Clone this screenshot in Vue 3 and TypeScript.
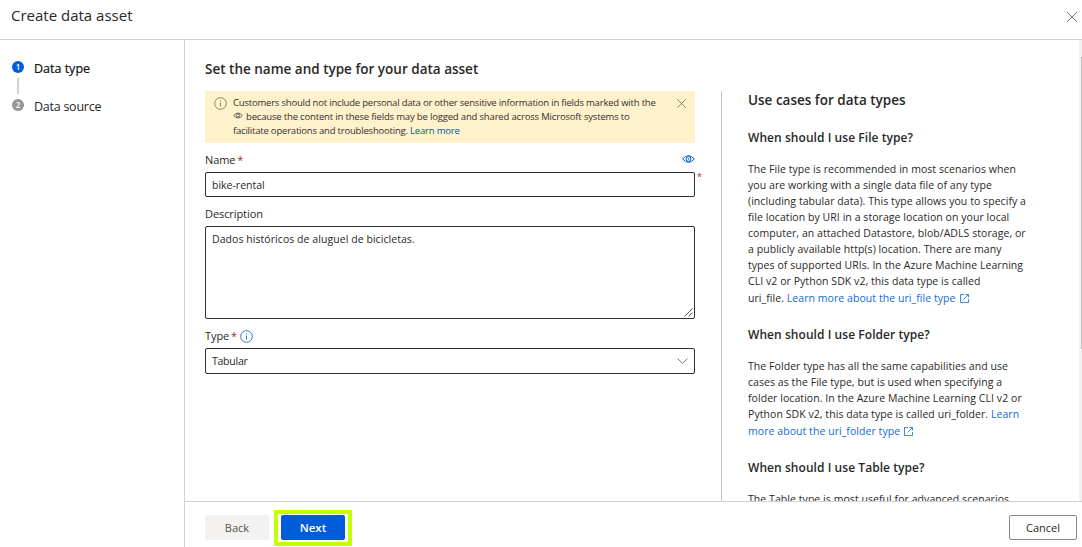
<script setup lang="ts">
interface Step {
  id: number
  label: string
  active: boolean
}
interface UseCase {
  title: string
  lines: string[]
  lead: string
  link: string
}

const steps: Step[] = [
  { id: 1, label: 'Data type', active: true },
  { id: 2, label: 'Data source', active: false },
]

const useCases: UseCase[] = [
  {
    title: 'When should I use File type?',
    lines: [
      'The File type is recommended in most scenarios when',
      'you are working with a single data file of any type',
      '(including tabular data). This type allows you to specify a',
      'file location by URI in a storage location on your local',
      'computer, an attached Datastore, blob/ADLS storage, or',
      'a publicly available http(s) location. There are many',
      'types of supported URIs. In the Azure Machine Learning',
      'CLI v2 or Python SDK v2, this data type is called',
    ],
    lead: 'uri_file.',
    link: 'Learn more about the uri_file type',
  },
  {
    title: 'When should I use Folder type?',
    lines: [
      'The Folder type has all the same capabilities and use',
      'cases as the File type, but is used when specifying a',
      'folder location. In the Azure Machine Learning CLI v2 or',
      'Python SDK v2, this data type is called uri_folder. |Learn',
    ],
    lead: '',
    link: 'more about the uri_folder type',
  },
  {
    title: 'When should I use Table type?',
    lines: ['The Table type is most useful for advanced scenarios'],
    lead: '',
    link: '',
  },
]
</script>

<template>
  <div class="panel">
    <header class="header">
      <h1>Create data asset</h1>
      <svg class="close" width="10" height="10" viewBox="0 0 10 10"><path d="M0 0L10 10M10 0L0 10" /></svg>
    </header>

    <div class="body">
      <nav class="steps">
        <div v-for="s in steps" :key="s.id" class="step" :class="{ active: s.active }">
          <span class="dot">{{ s.id }}</span>
          <span class="step-label">{{ s.label }}</span>
        </div>
      </nav>

      <div class="content">
        <main class="scroll">
          <section class="form">
            <h2>Set the name and type for your data asset</h2>

            <div class="notice">
              <svg class="notice-info" width="13" height="13" viewBox="0 0 13 13">
                <circle cx="6.5" cy="6.5" r="5.8" /><path d="M6.5 5.6V9.6M6.5 3.4V4.5" />
              </svg>
              <p>
                <span class="n1">Customers should not include personal data or other sensitive information in fields marked with the</span>
                <span class="n2"><svg class="mini-eye" width="10" height="7" viewBox="0 0 14 9"><path d="M1 4.5Q7-2.5 13 4.5Q7 11.5 1 4.5Z" /><circle cx="7" cy="4.5" r="2.2" /></svg>because the content in these fields may be logged and shared across Microsoft systems to</span>
                <span class="n3">facilitate operations and troubleshooting. <a>Learn more</a></span>
              </p>
              <svg class="notice-close" width="9" height="9" viewBox="0 0 9 9"><path d="M.3.3L8.7 8.7M8.7.3L.3 8.7" /></svg>
            </div>

            <div class="label-row name-row">
              <label>Name <i>*</i></label>
              <svg class="eye" width="13" height="8" viewBox="0 0 13 8">
                <path d="M.6 4Q6.5-2.6 12.4 4Q6.5 10.6.6 4Z" /><circle cx="6.5" cy="4" r="2.4" /><circle class="pupil" cx="6.5" cy="4" r=".8" />
              </svg>
            </div>
            <div class="box input"><span>bike-rental</span><i class="outer-star">*</i></div>

            <div class="label-row desc-row"><label>Description</label></div>
            <div class="box area">
              <span class="t-desc">Dados históricos de aluguel de bicicletas.</span>
              <svg class="grip" width="9" height="9" viewBox="0 0 9 9"><path d="M.5 8.5L8.5 .5M4.5 8.5L8.5 4.5" /></svg>
            </div>

            <div class="label-row type-row">
              <label>Type <i>*</i></label>
              <svg class="type-info" width="13" height="13" viewBox="0 0 13 13">
                <circle cx="6.5" cy="6.5" r="5.8" /><path d="M6.5 5.4V9.6M6.5 3.3V4.4" />
              </svg>
            </div>
            <div class="box select">
              <span class="t-tab">Tabular</span>
              <svg width="11" height="6" viewBox="0 0 11 6"><path d="M.5.5L5.5 5.3L10.5.5" /></svg>
            </div>
          </section>

          <aside class="help">
            <h3>Use cases for data types</h3>
            <article v-for="u in useCases" :key="u.title">
              <h4>{{ u.title }}</h4>
              <p>
                <span v-for="line in u.lines" :key="line" class="line">{{ line.split('|')[0] }}<a v-if="line.includes('|')">{{ line.split('|')[1] }}</a></span>
                <span v-if="u.link" class="line last">{{ u.lead ? u.lead + ' ' : '' }}<a>{{ u.link }}</a><svg class="ext" width="9" height="9" viewBox="0 0 9 9"><path d="M4 .5H.5V8.5H8.5V5M5.5.5H8.5V3.5M8.5.5L3.7 5.3" /></svg></span>
              </p>
            </article>
          </aside>
          <div class="track"><div class="thumb"></div></div>
        </main>

        <footer class="footer">
          <button class="back" type="button">Back</button>
          <div class="highlight"><button class="next" type="button">Next</button></div>
          <button class="cancel" type="button">Cancel</button>
        </footer>
      </div>
    </div>
  </div>
</template>

<style>
body {
  margin: 0;
}
</style>

<style scoped>
* {
  box-sizing: border-box;
}
.panel {
  width: 1082px;
  height: 547px;
  display: flex;
  flex-direction: column;
  overflow: hidden;
  background: #fff;
  color: #292827;
  font-family: 'Open Sans', 'Noto Sans', sans-serif;
  font-size: 10.5px;
}
h1, h2, h3, h4, p {
  margin: 0;
  white-space: nowrap;
}
svg {
  fill: none;
  stroke: currentColor;
  flex: none;
}
i {
  font-style: normal;
  color: #b3262d;
}
a {
  color: #1668dc;
}
.header {
  height: 40px;
  flex: none;
  border-bottom: 1px solid #d2d2d2;
  display: flex;
  justify-content: space-between;
  padding: 5px 5px 0 11px;
}
h1 {
  font-size: 15px;
  font-weight: 400;
  line-height: 21px;
}
.close {
  margin-top: 7px;
  color: #777;
}
.body {
  flex: 1;
  display: flex;
  min-height: 0;
}
.steps {
  width: 185px;
  flex: none;
  border-right: 1px solid #d2d2d2;
  padding: 18px 0 0 12px;
  display: flex;
  flex-direction: column;
  gap: 18px;
}
.step {
  display: flex;
  align-items: center;
  height: 20px;
  position: relative;
}
.step + .step::before {
  content: '';
  position: absolute;
  left: 5px;
  top: -18px;
  width: 2px;
  height: 16px;
  background: #d2d0ce;
}
.dot {
  width: 12px;
  height: 12px;
  margin-top: -2px;
  border-radius: 50%;
  background: #979593;
  color: #fff;
  font-size: 8px;
  font-weight: 600;
  line-height: 12px;
  text-align: center;
}
.active .dot {
  background: #015cda;
}
.step-label {
  margin-left: 10px;
  font-size: 12.5px;
  letter-spacing: -0.25px;
}
.active .step-label {
  color: #111;
  letter-spacing: 0;
  -webkit-text-stroke: 0.2px #111;
}
.content {
  flex: 1;
  display: flex;
  flex-direction: column;
  min-width: 0;
}
.scroll {
  flex: 1;
  min-height: 0;
  display: flex;
  overflow: hidden;
}
.form {
  width: 490px;
  margin-left: 20px;
  flex: none;
}
h2 {
  margin-top: 19px;
  font-size: 13.5px;
  font-weight: 600;
  line-height: 20px;
}
.notice {
  margin-top: 12px;
  height: 52px;
  background: #fff1cc;
  display: flex;
  padding: 5px 9px 0;
  font-size: 9.5px;
  letter-spacing: -0.2px;
  color: #323130;
}
.notice-info {
  margin-top: 1px;
  color: #6f6a60;
  stroke-width: 0.8;
}
.notice p {
  margin-left: 6px;
  flex: 1;
}
.notice p span {
  display: block;
  line-height: 14px;
  height: 14px;
}
.notice p .n2 {
  letter-spacing: -0.17px;
}
.notice p .n3 {
  height: 13px;
  line-height: 13px;
}
.notice a {
  color: #005a9e;
}
.mini-eye {
  margin-right: 3px;
  vertical-align: 1px;
}
.notice-close {
  margin-top: 3px;
  color: #6f6a60;
  stroke-width: 0.8;
}
.label-row {
  display: flex;
  align-items: center;
  font-size: 11px;
  line-height: 16px;
  letter-spacing: -0.08px;
}
.label-row i {
  margin-left: -1px;
}
.name-row {
  margin-top: 9px;
  height: 20px;
  justify-content: space-between;
  padding-bottom: 4px;
}
.eye {
  color: #015cda;
  margin-top: -3px;
}
.pupil {
  fill: #015cda;
  stroke: none;
}
.box {
  border: 1px solid #323130;
  border-radius: 2px;
  padding: 0 6px;
  display: flex;
  position: relative;
}
.input {
  height: 25px;
  align-items: center;
}
.outer-star {
  position: absolute;
  left: 491px;
  top: -3px;
  font-size: 9px;
}
.desc-row {
  margin-top: 9px;
  height: 20px;
  padding-bottom: 4px;
}
.area {
  height: 93px;
  padding-top: 5px;
}
.t-desc {
  letter-spacing: 0.06px;
}
.t-tab {
  letter-spacing: -0.25px;
}
.grip {
  position: absolute;
  right: 1px;
  bottom: 1px;
  stroke-width: 0.8;
}
.type-row {
  margin-top: 8px;
  height: 21px;
  padding-bottom: 3px;
}
.type-info {
  margin-left: 3px;
  color: #1668dc;
  stroke-width: 0.9;
}
.select {
  height: 26px;
  align-items: center;
  justify-content: space-between;
}
.select svg {
  color: #777;
}
.help {
  margin: 51px 0 0 26px;
  border-left: 1px solid #c8c6c4;
  padding-left: 26px;
  flex: 1;
}
h3 {
  margin-top: -1px;
  font-size: 13.5px;
  font-weight: 600;
  line-height: 20px;
}
h4 {
  font-size: 12px;
  font-weight: 600;
  line-height: 20px;
  letter-spacing: 0.06px;
}
article {
  margin-top: 18px;
}
article p {
  margin-top: 13px;
  letter-spacing: 0.06px;
}
.line {
  display: block;
  height: 16px;
  line-height: 16px;
}
.line.last {
  height: 18px;
  line-height: 18px;
}
.ext {
  margin-left: 4px;
  color: #1668dc;
  stroke-width: 0.8;
  vertical-align: -1px;
}
.track {
  width: 3px;
  background: #f1f1f1;
  padding: 17px 0 0 2px;
}
.thumb {
  height: 292px;
  background: #c1c1c1;
}
.footer {
  height: 46px;
  flex: none;
  border-top: 1px solid #d2d2d2;
  display: flex;
  align-items: flex-start;
  padding: 8px 5px 0 20px;
}
button {
  font-family: inherit;
  font-size: 11.5px;
  line-height: 15px;
  padding: 0;
  border: 0;
  border-radius: 2px;
  height: 25px;
}
.back {
  width: 64px;
  margin-top: 5px;
  background: #f3f2f1;
  color: #555;
  font-size: 11px;
}
.highlight {
  width: 78px;
  height: 36px;
  margin-left: 5px;
  border: 4px solid #c3ff00;
  padding: 1px 0 0 3px;
}
.next {
  width: 64px;
  background: #015cda;
  color: #fff;
  font-weight: 600;
}
.cancel {
  width: 68px;
  margin: 5px 0 0 auto;
  background: #fff;
  border: 1px solid #8a8886;
  color: #292827;
  font-size: 11px;
}
</style>
